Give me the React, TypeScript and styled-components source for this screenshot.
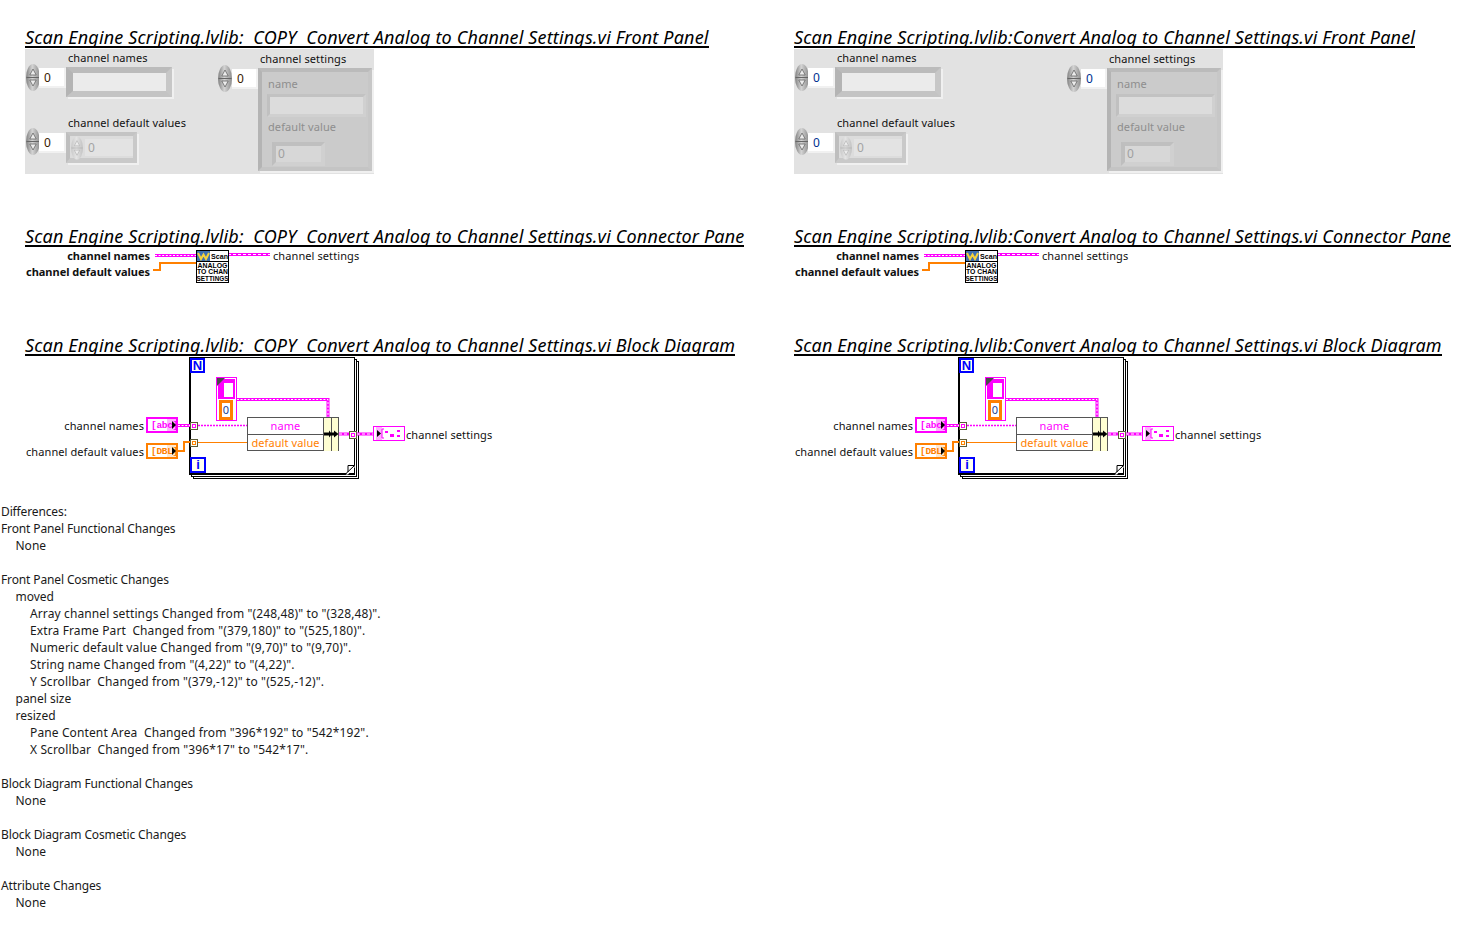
import React from "react";
import styled, { createGlobalStyle, css } from "styled-components";

const FONT = `"Noto Sans", "DejaVu Sans", sans-serif`;
const PINK = "#ff00ff";
const ORANGE = "#ff8000";

const Global = createGlobalStyle`
  html, body { margin: 0; padding: 0; background: #fff; }
  body { font-family: ${FONT}; color: #000; }
`;

type Pos = { $x: number; $y: number };
const at = css<Pos>`
  position: absolute;
  left: ${(p) => p.$x}px;
  top: ${(p) => p.$y}px;
`;
const smallText = css`
  font-size: 11px;
  line-height: 16px;
  letter-spacing: 0.09px;
  white-space: nowrap;
`;

const Page = styled.div`
  width: 1475px;
  height: 945px;
  padding-top: 28px;
  box-sizing: border-box;
  overflow: hidden;
`;
const Columns = styled.div`
  display: grid;
  grid-template-columns: 769px 681px;
  padding-left: 25px;
`;
const Column = styled.div`
  display: flex;
  flex-direction: column;
`;
const Section = styled.section<{ $h: number }>`
  height: ${(p) => p.$h}px;
`;
const Title = styled.h2`
  margin: 0;
  width: max-content;
  height: 18px;
  line-height: 18px;
  font-size: 18px;
  font-weight: 400;
  font-style: italic;
  white-space: pre;
  border-bottom: 2px solid #000;
  font-family: ${FONT};
  letter-spacing: 0.155px;
`;

/* ---------- front panel ---------- */
const Panel = styled.div<{ $w: number }>`
  position: relative;
  margin-top: 1px;
  width: ${(p) => p.$w}px;
  height: 125px;
  background: #e2e2e2;
`;
const Caption = styled.span<Pos>`
  ${at};
  ${smallText};
  color: #111;
`;
const SpinnerSlot = styled.div<Pos>`
  ${at};
  line-height: 0;
`;
const NestedSpinner = styled.div`
  line-height: 0;
  flex: none;
`;
const IndexBox = styled.div<Pos & { $w: number; $color: string }>`
  ${at};
  width: ${(p) => p.$w}px;
  height: 20px;
  box-sizing: border-box;
  background: #fff;
  border-right: 2px solid #f1f1f1;
  border-bottom: 2px solid #f1f1f1;
  font-size: 12px;
  line-height: 20px;
  padding-left: 5px;
  color: ${(p) => p.$color};
`;
const Frame = styled.div<Pos & { $w: number; $h: number }>`
  ${at};
  width: ${(p) => p.$w}px;
  height: ${(p) => p.$h}px;
  box-sizing: border-box;
  display: flex;
  align-items: stretch;
  border-style: solid;
  border-width: 6px 6px 6px 7px;
  border-color: #bbbbbb #c7c7c7 #c4c4c4 #b4b4b4;
  box-shadow: 2px 2px 0 #f0f0f0;
`;
const Field = styled.div<{ $bg?: string }>`
  flex: 1;
  background: ${(p) => p.$bg || "#ebebeb"};
`;
const NumericFrame = styled(Frame)`
  border-width: 4px 4px 5px 4px;
  border-color: #c4c4c4 #c9c9c9 #c9c9c9 #bebebe;
  background: #dcdcdc;
  gap: 2px;
  padding-left: 1px;
`;
const NumericField = styled.div`
  flex: 1;
  margin: 3px 0 2px 0;
  background: #e3e3e3;
  color: #a3a3a3;
  font-size: 12px;
  line-height: 18px;
  padding-left: 3px;
`;
const ClusterFrame = styled.div<Pos>`
  ${at};
  width: 114px;
  height: 103px;
  box-sizing: border-box;
  border-style: solid;
  border-width: 4px;
  border-color: #bbbbbb #c7c7c7 #c4c4c4 #b4b4b4;
  box-shadow: 2px 2px 0 #f0f0f0;
  background: #cbcbcb;
  display: flex;
  flex-direction: column;
  align-items: flex-start;
  padding: 4px 0 0 6px;
`;
const FadedCaption = styled.span`
  ${smallText};
  color: #8e8e8e;
`;
const ClusterString = styled.div`
  width: 99px;
  height: 23px;
  margin: 2px 0 2px -1px;
  box-sizing: border-box;
  border-style: solid;
  border-width: 3px;
  border-color: #c2c2c2 #d0d0d0 #d0d0d0 #c0c0c0;
  display: flex;
`;
const ClusterNumeric = styled.div`
  width: 53px;
  height: 24px;
  margin: 7px 0 0 4px;
  box-sizing: border-box;
  border-style: solid;
  border-width: 4px;
  border-color: #bfbfbf #d0d0d0 #d0d0d0 #bebebe;
  background: #d7d7d7;
  color: #a0a0a0;
  font-size: 12px;
  line-height: 16px;
  padding-left: 2px;
`;

function Spinner({ faded, w = 14, h = 27 }: { faded?: boolean; w?: number; h?: number }) {
  const id = faded ? "spinFaded" : "spinSolid";
  const line = faded ? "#b4b4b4" : "#666";
  return (
    <svg width={w} height={h} viewBox="0 0 14 27">
      <defs>
        <linearGradient id={id} x1="0" x2="1" y1="0" y2="0">
          <stop offset="0" stopColor={faded ? "#c8c8c8" : "#808080"} />
          <stop offset="0.45" stopColor={faded ? "#e4e4e4" : "#d4d4d4"} />
          <stop offset="1" stopColor={faded ? "#c2c2c2" : "#8c8c8c"} />
        </linearGradient>
      </defs>
      <ellipse cx="7" cy="13.5" rx="7" ry="13.5" fill={`url(#${id})`} />
      <line x1="0.5" y1="13.5" x2="13.5" y2="13.5" stroke={line} />
      <path d="M7 5 L3.8 11 H10.2 Z" fill="#ececec" stroke={line} strokeWidth="0.8" />
      <path d="M7 22 L3.8 16 H10.2 Z" fill="#ececec" stroke={line} strokeWidth="0.8" />
    </svg>
  );
}

function FrontPanel({ width, shift, digit }: { width: number; shift: number; digit: string }) {
  return (
    <Panel $w={width}>
      <SpinnerSlot $x={1} $y={15}><Spinner /></SpinnerSlot>
      <IndexBox $x={14} $y={19} $w={27} $color={digit}>0</IndexBox>
      <Caption $x={43} $y={1}>channel names</Caption>
      <Frame $x={41} $y={18} $w={106} $h={30}><Field /></Frame>

      <SpinnerSlot $x={1} $y={79}><Spinner /></SpinnerSlot>
      <IndexBox $x={14} $y={84} $w={27} $color={digit}>0</IndexBox>
      <Caption $x={43} $y={66}>channel default values</Caption>
      <NumericFrame $x={41} $y={83} $w={71} $h={31}>
        <NestedSpinner><Spinner faded w={12} h={24} /></NestedSpinner>
        <NumericField>0</NumericField>
      </NumericFrame>

      <Caption $x={235 + shift} $y={2}>channel settings</Caption>
      <SpinnerSlot $x={193 + shift} $y={16}><Spinner /></SpinnerSlot>
      <IndexBox $x={207 + shift} $y={20} $w={26} $color={digit}>0</IndexBox>
      <ClusterFrame $x={233 + shift} $y={19}>
        <FadedCaption>name</FadedCaption>
        <ClusterString><Field $bg="#dcdcdc" /></ClusterString>
        <FadedCaption>default value</FadedCaption>
        <ClusterNumeric>0</ClusterNumeric>
      </ClusterFrame>
    </Panel>
  );
}

/* ---------- diagrams ---------- */
const Canvas = styled.div<{ $h: number }>`
  position: relative;
  margin-top: 1px;
  height: ${(p) => p.$h}px;
`;
const WireLayer = styled.svg`
  position: absolute;
  left: 0;
  top: 0;
  overflow: visible;
`;
const EndLabel = styled.span<{ $end: number; $y: number; $bold?: boolean }>`
  position: absolute;
  right: calc(100% - ${(p) => p.$end}px);
  top: ${(p) => p.$y}px;
  ${smallText};
  font-weight: ${(p) => (p.$bold ? 700 : 400)};
  letter-spacing: ${(p) => (p.$bold ? -0.01 : 0.09)}px;
  color: #111;
`;
const StartLabel = styled.span<Pos>`
  ${at};
  ${smallText};
  color: #111;
`;

function ThickString({ d }: { d: string }) {
  return (
    <>
      <path d={d} fill="none" stroke={PINK} strokeWidth={3} />
      <path d={d} fill="none" stroke="#fff" strokeWidth={1} strokeDasharray="2 1.6" />
    </>
  );
}
function ClusterWire({ d }: { d: string }) {
  return (
    <>
      <path d={d} fill="none" stroke={PINK} strokeWidth={3} />
      <path d={d} fill="none" stroke="#fff" strokeWidth={1} strokeDasharray="3 2" />
    </>
  );
}

function ScanIcon() {
  return (
    <svg width="33" height="33" viewBox="0 0 33 33" fontFamily="Liberation Sans, sans-serif">
      <rect x="0.5" y="0.5" width="32" height="32" fill="#fff" stroke="#000" />
      <rect x="1" y="1" width="13" height="10" fill="#3d6fb0" />
      <path d="M2 3 L5 9 L7.5 4.5 L10 9 L13 3" fill="none" stroke="#f5d23c" strokeWidth="2" />
      <text x="15" y="9" fontSize="7.5" fontWeight="700" textLength="17" lengthAdjust="spacingAndGlyphs">Scan</text>
      <line x1="1" y1="11.5" x2="32" y2="11.5" stroke="#000" />
      <text x="1.5" y="17.5" fontSize="6.6" fontWeight="700" textLength="30" lengthAdjust="spacingAndGlyphs">ANALOG</text>
      <text x="1" y="24" fontSize="6.6" fontWeight="700" textLength="31" lengthAdjust="spacingAndGlyphs">TO CHAN</text>
      <text x="0.5" y="30.5" fontSize="6.6" fontWeight="700" textLength="32" lengthAdjust="spacingAndGlyphs">SETTINGS</text>
    </svg>
  );
}
const IconSlot = styled.div<Pos>`
  ${at};
  line-height: 0;
`;

function ConnectorPane() {
  return (
    <Canvas $h={40}>
      <EndLabel $end={125} $y={0} $bold>channel names</EndLabel>
      <EndLabel $end={125} $y={16} $bold>channel default values</EndLabel>
      <WireLayer width="300" height="40">
        <ThickString d="M130 7.5 H172" />
        <path d="M128 22 H135 V15 H172" fill="none" stroke={ORANGE} strokeWidth={2} />
        <ClusterWire d="M203 6.5 H245" />
      </WireLayer>
      <IconSlot $x={171} $y={2}><ScanIcon /></IconSlot>
      <StartLabel $x={248} $y={0}>channel settings</StartLabel>
    </Canvas>
  );
}

const LoopEdge = styled.div<Pos & { $w: number; $h: number }>`
  ${at};
  width: ${(p) => p.$w}px;
  height: ${(p) => p.$h}px;
  box-sizing: border-box;
  border: 1px solid #000;
  background: #fff;
`;
const LoopFront = styled(LoopEdge)`
  border-width: 1px 1px 2px 2px;
`;
const LoopMark = styled.div<Pos & { $w: number; $h: number }>`
  ${at};
  width: ${(p) => p.$w}px;
  height: ${(p) => p.$h}px;
  box-sizing: border-box;
  border: 2px solid #0000ff;
  background: #fffff0;
  color: #0000ff;
  font: 700 13px/11px "Liberation Sans", sans-serif;
  text-align: center;
`;
const Tunnel = styled.div<Pos & { $c: string }>`
  ${at};
  width: 8px;
  height: 8px;
  box-sizing: border-box;
  border: 1px solid #5b5b3a;
  background: #fffff0;
  &::after {
    content: "";
    display: block;
    margin: 1px;
    height: 4px;
    box-sizing: border-box;
    border: 1px solid ${(p) => p.$c};
  }
`;
const Terminal = styled.div<Pos & { $c: string }>`
  ${at};
  width: 32px;
  height: 16px;
  box-sizing: border-box;
  border: 2px solid ${(p) => p.$c};
  background: #fff;
  color: ${(p) => p.$c};
  font: 700 9.5px/14px "Liberation Mono", monospace;
  white-space: nowrap;
  padding-left: 3px;
  letter-spacing: -0.3px;
  overflow: hidden;
`;
const ClusterTerminal = styled(Terminal)`
  height: 15px;
  border-width: 1px;
  padding: 0;
`;
const TermArrow = styled.i<{ $tint: string }>`
  position: absolute;
  right: 0;
  top: 0;
  width: 9px;
  height: 12px;
  background: ${(p) => p.$tint};
  &::after {
    content: "";
    position: absolute;
    right: 0;
    top: 2px;
    border-left: 4px solid #000;
    border-top: 4px solid transparent;
    border-bottom: 4px solid transparent;
  }
`;
const TerminalGlyph = styled.svg`
  position: absolute;
  left: 0;
  top: 0;
`;
const ArrayShell = styled.div<Pos>`
  ${at};
  width: 21px;
  height: 44px;
  box-sizing: border-box;
  border: 1px solid ${PINK};
  background: #fff;
  padding: 1px;
`;
const ArrayCell = styled.div`
  width: 17px;
  height: 20px;
  box-sizing: border-box;
  border: solid ${PINK};
  border-width: 4px 2px 2px 6px;
  background: #fff;
`;
const ArrayIndexCorner = styled.i`
  position: absolute;
  left: 0;
  top: 0;
  border-top: 8px solid #4a4a4a;
  border-right: 8px solid transparent;
`;
const ArrayValue = styled.div`
  margin: 1px 0 0 1px;
  width: 14px;
  height: 20px;
  box-sizing: border-box;
  border: 3px solid ${ORANGE};
  font-size: 11px;
  line-height: 14px;
  text-align: center;
  color: #1b3f8f;
  background: #fff;
`;
const Bundle = styled.div<Pos>`
  ${at};
  width: 92px;
  height: 34px;
  box-sizing: border-box;
  border: 1px solid #555;
  display: grid;
  grid-template-columns: 75px 8px 1fr;
  background: #fff;
`;
const BundleNames = styled.div`
  display: flex;
  flex-direction: column;
`;
const BundleName = styled.div<{ $c: string; $rule?: boolean }>`
  flex: 1;
  color: ${(p) => p.$c};
  ${smallText};
  text-align: center;
  border-bottom: ${(p) => (p.$rule ? "1px solid #555" : "none")};
`;
const BundleStrip = styled.div`
  background: #fefed2;
  border-left: 1px solid #555;
`;
const ArrowSlot = styled.svg`
  position: absolute;
  left: 76px;
  top: 12px;
`;
const DogEar = styled.svg<Pos>`
  ${at};
`;

function BlockDiagram() {
  const ox = 25, oy = 357;
  const X = (v: number) => v - ox;
  const Y = (v: number) => v - oy;
  return (
    <Canvas $h={122}>
      <LoopEdge $x={X(193)} $y={4} $w={166} $h={118} />
      <LoopEdge $x={X(191)} $y={2} $w={166} $h={118} />
      <LoopFront $x={X(189)} $y={0} $w={166} $h={118} />
      <EndLabel $end={119} $y={Y(418)}>channel names</EndLabel>
      <EndLabel $end={119} $y={Y(444)}>channel default values</EndLabel>
      <Terminal $x={X(146)} $y={Y(417)} $c={PINK}>[abc]<TermArrow $tint="rgba(255,0,255,.3)" /></Terminal>
      <Terminal $x={X(146)} $y={Y(443)} $c={ORANGE}>[DBL]<TermArrow $tint="rgba(255,128,0,.18)" /></Terminal>
      <WireLayer width="500" height="125">
        <ThickString d={`M${X(178)} ${Y(425.5)} H${X(190)}`} />
        <path d={`M${X(198)} ${Y(425.5)} H${X(247)}`} stroke={PINK} strokeWidth={1.5} strokeDasharray="2 1" fill="none" />
        <path d={`M${X(178)} ${Y(451)} H${X(184)} V${Y(442)} H${X(190)}`} fill="none" stroke={ORANGE} strokeWidth={2} />
        <path d={`M${X(198)} ${Y(442.5)} H${X(247)}`} fill="none" stroke={ORANGE} strokeWidth={1.2} />
        <ThickString d={`M${X(237)} ${Y(399.5)} H${X(328)} V${Y(417)}`} />
        <ClusterWire d={`M${X(339)} ${Y(434)} H${X(349)}`} />
        <ClusterWire d={`M${X(357)} ${Y(434)} H${X(373)}`} />
      </WireLayer>
      <LoopMark $x={X(190)} $y={Y(358)} $w={15} $h={15}>N</LoopMark>
      <LoopMark $x={X(190)} $y={Y(457)} $w={16} $h={16}>i</LoopMark>
      <Tunnel $x={X(190)} $y={Y(422)} $c={PINK} />
      <Tunnel $x={X(190)} $y={Y(439)} $c={ORANGE} />
      <Tunnel $x={X(349)} $y={Y(431)} $c={PINK} />
      <ArrayShell $x={X(216)} $y={Y(377)}>
        <ArrayIndexCorner />
        <ArrayCell />
        <ArrayValue>0</ArrayValue>
      </ArrayShell>
      <Bundle $x={X(247)} $y={Y(417)}>
        <BundleNames>
          <BundleName $c={PINK} $rule>name</BundleName>
          <BundleName $c={ORANGE}>default value</BundleName>
        </BundleNames>
        <BundleStrip />
        <BundleStrip />
        <ArrowSlot width="15" height="8" viewBox="0 0 15 8">
          <path d="M0 2.5 H5 V0.5 L8 4 L5 7.5 V5.5 H0 Z M7 2.5 H10 V0.5 L14.5 4 L10 7.5 V5.5 H7 Z" fill="#000" />
        </ArrowSlot>
      </Bundle>
      <DogEar $x={X(345)} $y={Y(465)} width="10" height="10" viewBox="0 0 10 10">
        <path d="M9.5 0.5 V3 H9 L3 9.5 H0.5 L3 7 V0.5 Z" fill="#fff" />
        <path d="M0 9.5 L9.5 0.5 H3 V7" fill="none" stroke="#000" />
      </DogEar>
      <ClusterTerminal $x={X(373)} $y={Y(426)} $c={PINK}>
        <TerminalGlyph width="30" height="13" viewBox="0 0 30 13">
          <rect x="2" y="0" width="6" height="13" fill="#ffb0ff" />
          <path d="M3 3 L7 6.5 L3 10 Z" fill="#000" />
          <path d="M10 2 H8 V11 H10" fill="none" stroke={PINK} />
          <rect x="11" y="4" width="3" height="2" fill={PINK} />
          <rect x="16" y="7" width="4" height="3" fill={PINK} />
          <rect x="23" y="3" width="3" height="2" fill={PINK} />
          <rect x="23" y="8" width="3" height="2" fill={PINK} />
        </TerminalGlyph>
      </ClusterTerminal>
      <StartLabel $x={X(406)} $y={Y(427)}>channel settings</StartLabel>
    </Canvas>
  );
}

/* ---------- text report ---------- */
const Report = styled.div`
  margin-top: 25px;
  font-size: 12px;
  line-height: 17px;
  color: #1a1a1a;
  padding-left: 1px;
`;
const ReportLine = styled.div<{ $level: number }>`
  height: 17px;
  padding-left: ${(p) => p.$level * 14.5}px;
  white-space: pre;
  letter-spacing: ${(p) => (p.$level === 0 ? -0.13 : p.$level === 2 ? 0.12 : 0)}px;
`;

const lines: [number, string][] = [
  [0, "Differences:"],
  [0, "Front Panel Functional Changes"],
  [1, "None"],
  [0, ""],
  [0, "Front Panel Cosmetic Changes"],
  [1, "moved"],
  [2, 'Array channel settings Changed from "(248,48)" to "(328,48)".'],
  [2, 'Extra Frame Part  Changed from "(379,180)" to "(525,180)".'],
  [2, 'Numeric default value Changed from "(9,70)" to "(9,70)".'],
  [2, 'String name Changed from "(4,22)" to "(4,22)".'],
  [2, 'Y Scrollbar  Changed from "(379,-12)" to "(525,-12)".'],
  [1, "panel size"],
  [1, "resized"],
  [2, 'Pane Content Area  Changed from "396*192" to "542*192".'],
  [2, 'X Scrollbar  Changed from "396*17" to "542*17".'],
  [0, ""],
  [0, "Block Diagram Functional Changes"],
  [1, "None"],
  [0, ""],
  [0, "Block Diagram Cosmetic Changes"],
  [1, "None"],
  [0, ""],
  [0, "Attribute Changes"],
  [1, "None"],
];

function ViColumn({ prefix, panelWidth, shift, digit }: { prefix: string; panelWidth: number; shift: number; digit: string }) {
  return (
    <Column>
      <Section $h={199}>
        <Title>{prefix} Front Panel</Title>
        <FrontPanel width={panelWidth} shift={shift} digit={digit} />
      </Section>
      <Section $h={109}>
        <Title>{prefix} Connector Pane</Title>
        <ConnectorPane />
      </Section>
      <Section $h={142}>
        <Title>{prefix} Block Diagram</Title>
        <BlockDiagram />
      </Section>
    </Column>
  );
}

export default function App() {
  return (
    <Page>
      <Global />
      <Columns>
        <ViColumn
          prefix="Scan Engine Scripting.lvlib:  COPY  Convert Analog to Channel Settings.vi"
          panelWidth={349}
          shift={0}
          digit="#3a2000"
        />
        <ViColumn
          prefix="Scan Engine Scripting.lvlib:Convert Analog to Channel Settings.vi"
          panelWidth={429}
          shift={80}
          digit="#00308f"
        />
      </Columns>
      <Report>
        {lines.map(([level, text], i) => (
          <ReportLine key={i} $level={level}>{text}</ReportLine>
        ))}
      </Report>
    </Page>
  );
}
